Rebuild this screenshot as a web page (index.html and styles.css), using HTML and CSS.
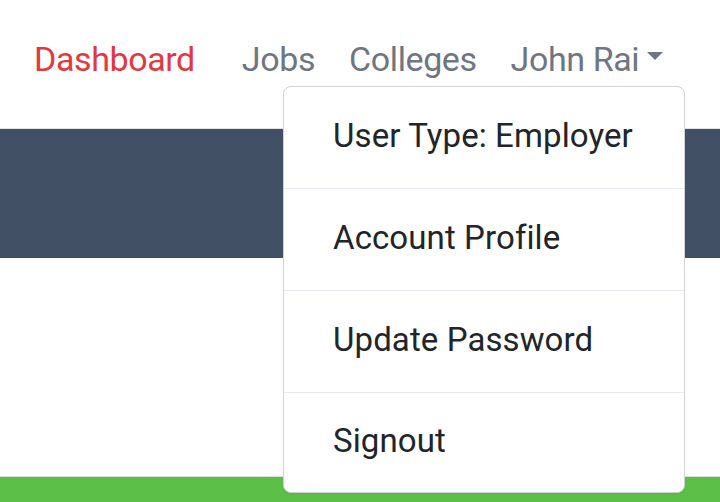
FILE: index.html
```html
<!DOCTYPE html>
<html>
<head>
<meta charset="utf-8">
<link rel="stylesheet" href="styles.css">
</head>
<body>
<div class="page">
  <header class="topbar">
    <nav class="nav">
      <a class="nav-link active brand-gap">Dashboard</a>
      <a class="nav-link">Jobs</a>
      <a class="nav-link">Colleges</a>
      <a class="nav-link dropdown-toggle">John Rai<span class="caret"></span></a>
    </nav>
  </header>
  <section class="band"></section>
  <section class="content"></section>
  <footer class="green"></footer>
  <div class="dropdown-menu">
    <div class="dropdown-item">User Type: Employer</div>
    <div class="divider"></div>
    <div class="dropdown-item">Account Profile</div>
    <div class="divider"></div>
    <div class="dropdown-item">Update Password</div>
    <div class="divider"></div>
    <div class="dropdown-item last">Signout</div>
  </div>
</div>
</body>
</html>
```
FILE: styles.css
```css
* { box-sizing: border-box; }
html, body { margin: 0; padding: 0; }
body {
  width: 720px;
  height: 502px;
  overflow: hidden;
  background: #fff;
  font-family: Roboto, "Liberation Sans", sans-serif;
}
.page {
  position: relative;
  width: 720px;
  height: 502px;
  display: flex;
  flex-direction: column;
}
.topbar {
  height: 128px;
  display: flex;
  align-items: flex-start;
}
.nav {
  display: flex;
  align-items: center;
  padding-left: 17px;
  padding-top: 36px;
}
.nav-link {
  font-size: 34px;
  line-height: 46px;
  padding: 0 17px;
  color: #6f7682;
  text-decoration: none;
  display: flex;
  align-items: center;
  letter-spacing: -0.4px;
}
.nav-link.active { color: #e3383f; }
.nav-link.brand-gap { margin-right: 13px; }
.caret {
  display: inline-block;
  width: 0;
  height: 0;
  margin-left: 8px;
  border-top: 8px solid #6f7682;
  border-left: 8.5px solid transparent;
  border-right: 8.5px solid transparent;
  margin-top: -6px;
}
.band {
  height: 130px;
  background: #425066;
  border-top: 1px solid #e4e4e4;
}
.content {
  flex: 1;
  border-bottom: 1px solid #dcdcdc;
}
.green {
  height: 25px;
  background: #5bbf48;
}
.dropdown-menu {
  position: absolute;
  top: 86px;
  left: 283px;
  width: 402px;
  background: #fff;
  border: 1px solid #d3d3d3;
  border-radius: 8px;
  box-shadow: 0 1px 2px rgba(0,0,0,0.05);
}
.dropdown-item {
  height: 101px;
  padding-left: 49px;
  display: flex;
  align-items: center;
  font-size: 33px;
  color: #212529;
  letter-spacing: 0.1px;
  padding-bottom: 4px;
}
.dropdown-item.last { height: 99px; }
.divider {
  height: 1px;
  background: #e6e9ed;
}
```
